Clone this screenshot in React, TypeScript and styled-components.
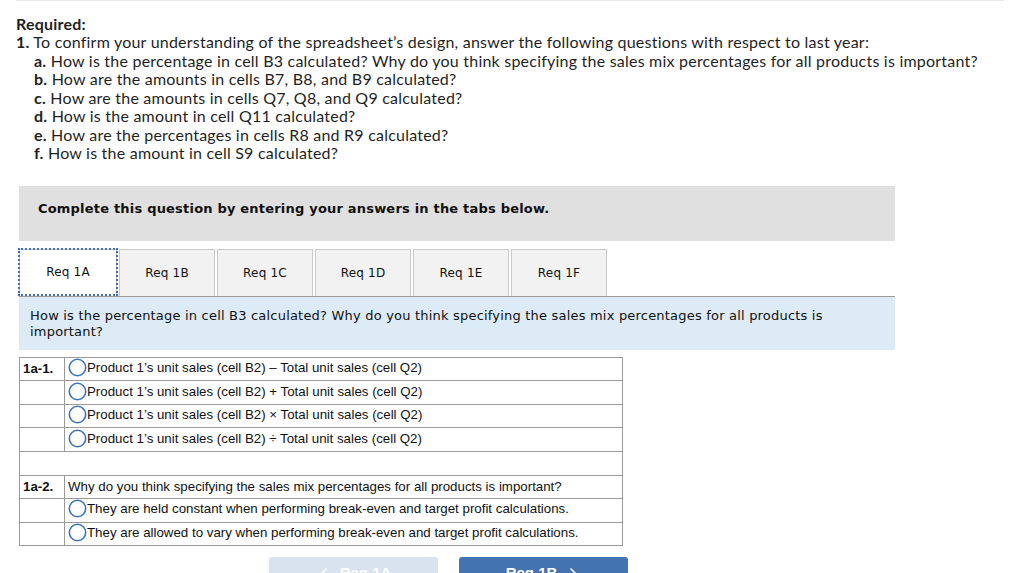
import styled, { createGlobalStyle } from "styled-components";
import { ChevronLeft, ChevronRight } from "lucide-react";

const GlobalStyle = createGlobalStyle`
  html, body {
    margin: 0;
    padding: 0;
    background: #ffffff;
  }
`;

const Page = styled.div`
  padding: 0 20px 0 16px;
  color: #222;
`;

const Required = styled.div`
  border-top: 1px solid #e8e8e8;
  padding-top: 14px;
  font-family: Lato, "Noto Sans", sans-serif;
  font-size: 16px;
  letter-spacing: 0.22px;
  line-height: 18.45px;
  color: #1f1f1f;

  b {
    font-weight: 700;
  }
`;

const SubList = styled.div`
  padding-left: 18px;
`;

const QuestionPanel = styled.div`
  width: 876px;
  margin: 23px 0 0 3px;
  font-family: Verdana, "DejaVu Sans", sans-serif;
  letter-spacing: 0.2px;
`;

const Banner = styled.div`
  background: #e0e0e0;
  padding: 15px 19px 24px;
  font-size: 13px;
  font-weight: bold;
  line-height: 16px;
  color: #111;
`;

const TabRow = styled.div`
  display: flex;
  gap: 2px;
  margin-top: 8px;
  border-bottom: 1px solid #9a9a9a;
`;

const Tab = styled.div<{ $active?: boolean }>`
  width: ${(p) => (p.$active ? "96px" : "94px")};
  height: ${(p) => (p.$active ? "45px" : "46px")};
  display: flex;
  align-items: center;
  justify-content: center;
  font-size: 12px;
  color: #111;
  background: ${(p) => (p.$active ? "#ffffff" : "#f2f2f2")};
  border: 1px solid #c9c9c9;
  border-bottom: none;
  margin-bottom: ${(p) => (p.$active ? "-1px" : "0")};
  outline: ${(p) => (p.$active ? "2px dotted #3f6db5" : "none")};
  outline-offset: -1px;
  position: relative;
`;

const Prompt = styled.div`
  background: #ddebf7;
  padding: 11px 40px 5px 11px;
  font-size: 13px;
  line-height: 16px;
  height: 37px;
  color: #111;
`;

const Table = styled.table`
  margin-top: 7px;
  width: 604px;
  border-collapse: collapse;
  border: 1px solid #7a7a7a;
  font-family: "Liberation Sans", Arial, sans-serif;
  font-size: 13.3px;
  letter-spacing: 0;
  color: #111;

  td {
    border: 1px solid #9a9a9a;
    height: 22.6px;
    padding: 0 3px;
    white-space: nowrap;
  }

  td:first-child {
    width: 38px;
    font-weight: bold;
  }
`;

const Option = styled.span`
  display: inline-flex;
  align-items: center;
`;

const Radio = () => (
  <svg width="19" height="19" viewBox="0 0 19 19" style={{ flexShrink: 0 }}>
    <circle cx="9.5" cy="9.5" r="8.2" fill="#fff" stroke="#3a73c2" strokeWidth="1.6" />
  </svg>
);

const ButtonRow = styled.div`
  display: flex;
  gap: 21px;
  margin-top: 11px;
  padding-left: 250px;
`;

const NavButton = styled.div<{ $disabled?: boolean }>`
  width: 169px;
  height: 40px;
  box-sizing: border-box;
  padding-top: 7px;
  border-radius: 3px;
  display: flex;
  justify-content: center;
  align-items: flex-start;
  gap: 8px;
  font-family: "Liberation Sans", Arial, sans-serif;
  font-size: 15px;
  font-weight: bold;
  letter-spacing: 0;
  line-height: 18px;
  color: #fff;
  background: ${(p) => (p.$disabled ? "#d9e3ef" : "#4473b1")};
`;

const options1 = [
  "Product 1\u2019s unit sales (cell B2) \u2013 Total unit sales (cell Q2)",
  "Product 1\u2019s unit sales (cell B2) + Total unit sales (cell Q2)",
  "Product 1\u2019s unit sales (cell B2) \u00d7 Total unit sales (cell Q2)",
  "Product 1\u2019s unit sales (cell B2) \u00f7 Total unit sales (cell Q2)",
];

const options2 = [
  "They are held constant when performing break-even and target profit calculations.",
  "They are allowed to vary when performing break-even and target profit calculations.",
];

const tabs = ["Req 1A", "Req 1B", "Req 1C", "Req 1D", "Req 1E", "Req 1F"];

export default function App() {
  return (
    <>
      <GlobalStyle />
      <Page>
        <Required>
          <div><b>Required:</b></div>
          <div><b>1.</b> To confirm your understanding of the spreadsheet’s design, answer the following questions with respect to last year:</div>
          <SubList>
            <div><b>a.</b> How is the percentage in cell B3 calculated? Why do you think specifying the sales mix percentages for all products is important?</div>
            <div><b>b.</b> How are the amounts in cells B7, B8, and B9 calculated?</div>
            <div><b>c.</b> How are the amounts in cells Q7, Q8, and Q9 calculated?</div>
            <div><b>d.</b> How is the amount in cell Q11 calculated?</div>
            <div><b>e.</b> How are the percentages in cells R8 and R9 calculated?</div>
            <div><b>f.</b> How is the amount in cell S9 calculated?</div>
          </SubList>
        </Required>

        <QuestionPanel>
          <Banner>Complete this question by entering your answers in the tabs below.</Banner>
          <TabRow>
            {tabs.map((t, i) => (
              <Tab key={t} $active={i === 0}>{t}</Tab>
            ))}
          </TabRow>
          <Prompt>
            How is the percentage in cell B3 calculated? Why do you think specifying the sales mix percentages for all products is important?
          </Prompt>

          <Table>
            <tbody>
              {options1.map((o, i) => (
                <tr key={o}>
                  <td>{i === 0 ? "1a-1." : ""}</td>
                  <td>
                    <Option><Radio />{o}</Option>
                  </td>
                </tr>
              ))}
              <tr>
                <td colSpan={2}></td>
              </tr>
              <tr>
                <td>1a-2.</td>
                <td>Why do you think specifying the sales mix percentages for all products is important?</td>
              </tr>
              {options2.map((o) => (
                <tr key={o}>
                  <td></td>
                  <td>
                    <Option><Radio />{o}</Option>
                  </td>
                </tr>
              ))}
            </tbody>
          </Table>

          <ButtonRow>
            <NavButton $disabled>
              <ChevronLeft size={16} strokeWidth={2.5} style={{ marginTop: 1 }} />
              Req 1A
            </NavButton>
            <NavButton>
              Req 1B
              <ChevronRight size={16} strokeWidth={2.5} style={{ marginTop: 1 }} />
            </NavButton>
          </ButtonRow>
        </QuestionPanel>
      </Page>
    </>
  );
}
